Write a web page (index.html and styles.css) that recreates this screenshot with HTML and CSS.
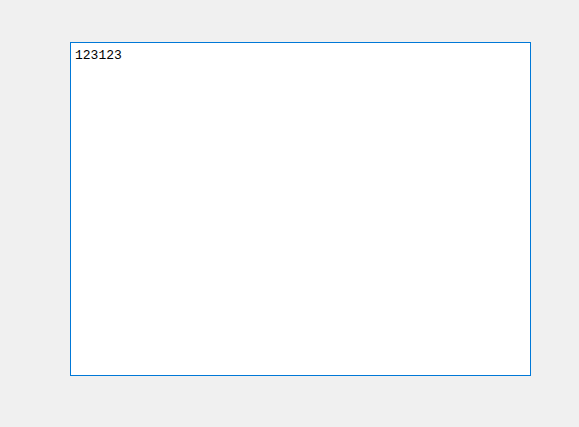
FILE: index.html
```html
<!DOCTYPE html>
<html>
<head>
<meta charset="utf-8">
<link rel="stylesheet" href="styles.css">
</head>
<body>
<div class="page">
  <div class="editor">123123</div>
</div>
</body>
</html>
```

FILE: styles.css
```css
html, body {
  margin: 0;
  padding: 0;
  background: #f0f0f0;
  width: 579px;
  height: 427px;
  overflow: hidden;
}
.page {
  padding: 42px 0 0 70px;
}
.editor {
  box-sizing: border-box;
  width: 461px;
  height: 334px;
  border: 1px solid #0078d7;
  background: #ffffff;
  padding: 5px 3px 0 4px;
  font-family: "Liberation Mono", monospace;
  font-size: 13px;
  line-height: 16px;
  color: #000;
}
```
